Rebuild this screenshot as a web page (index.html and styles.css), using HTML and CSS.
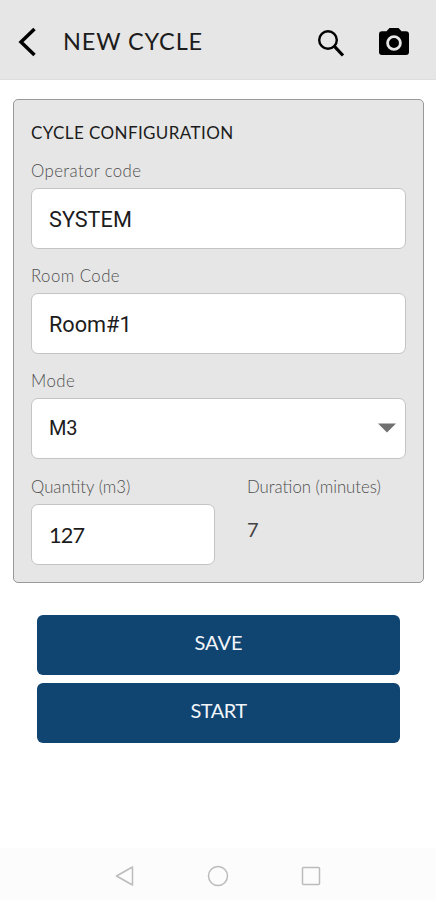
FILE: index.html
```html
<!DOCTYPE html>
<html lang="en">
<head>
<meta charset="utf-8">
<title>New Cycle</title>
<link rel="stylesheet" href="styles.css">
</head>
<body>
<header class="bar">
  <svg class="back" width="20" height="32" viewBox="0 0 20 32"><path d="M16.500 3 3 16 16.500 29" fill="none" stroke="#000" stroke-width="3.500"/></svg>
  <h1 class="title">NEW CYCLE</h1>
  <svg class="search" width="28" height="28" viewBox="0 0 28 28" fill="none" stroke="#000"><circle cx="11" cy="11" r="8.800" stroke-width="2.400"/><path d="M17.200 17.200 26 26.500" stroke-width="3.200"/></svg>
  <svg class="camera" width="32" height="30" viewBox="0 0 32 30"><path d="M11.500 1h9l3 3.300H28a3 3 0 0 1 3 3V25a3 3 0 0 1-3 3H4a3 3 0 0 1-3-3V7.300a3 3 0 0 1 3-3h4.500z"/><circle cx="16" cy="16" r="6.400" fill="#000" stroke="#e6e6e6" stroke-width="2.800"/></svg>
</header>
<main class="content">
  <section class="card">
    <h2 class="heading">CYCLE CONFIGURATION</h2>
    <div class="group">
      <div class="label operator">Operator code</div>
      <div class="field"><span class="system">SYSTEM</span></div>
    </div>
    <div class="group">
      <div class="label room">Room Code</div>
      <div class="field"><span class="room-value">Room#1</span></div>
    </div>
    <div class="group">
      <div class="label mode">Mode</div>
      <div class="field select"><span class="mode-value">M3</span><svg width="18" height="10" viewBox="0 0 18 10"><path d="M0 .5h18L9 9.500z" fill="#707070"/></svg></div>
    </div>
    <div class="columns">
      <div>
        <div class="label quantity">Quantity (m3)</div>
        <div class="field number"><span>127</span></div>
      </div>
      <div>
        <div class="label duration">Duration (minutes)</div>
        <div class="result">7</div>
      </div>
    </div>
  </section>
  <div class="actions">
    <button class="save">SAVE</button>
    <button class="start">START</button>
  </div>
</main>
<nav class="nav">
  <svg width="20" height="22" viewBox="0 0 20 22"><path d="M17.500 2v18L1.500 11z"/></svg>
  <svg width="22" height="22" viewBox="0 0 22 22"><circle cx="11" cy="11" r="9.500"/></svg>
  <svg width="20" height="20" viewBox="0 0 20 20"><rect x="1.500" y="1.500" width="17" height="17" rx="1"/></svg>
</nav>
</body>
</html>
```
FILE: styles.css
```css
* { box-sizing: border-box; }
body { margin: 0; height: 900px; display: flex; flex-direction: column; background: #fff; color: #1c1c1c; font-family: Lato, "Liberation Sans", sans-serif; overflow: hidden; }
.bar { height: 80px; flex: none; display: flex; align-items: center; padding: 5px 26px 0 18px; background: #e6e6e6; border-bottom: 1px solid #dedede; }
.title { margin: -2px auto 0 25px; font-size: 23.500px; line-height: 30px; font-weight: 400; letter-spacing: .85px; white-space: nowrap; }
.search { margin: 2px 33px 0 0; }
.content { flex: 1; padding: 19px 12px 0 13px; }
.card { height: 484px; border: 1px solid #999; border-radius: 5px; background: #e6e6e6; padding: 23px 17px 0; }
.heading { margin: 0 0 8px; font-size: 17px; line-height: 20px; font-weight: 400; letter-spacing: .4px; white-space: nowrap; }
.label { height: 20px; margin-bottom: 8px; font-size: 16.800px; line-height: 22px; color: #505050; font-weight: 300; white-space: nowrap; }
.operator { letter-spacing: .4px; }
.room, .mode { letter-spacing: .45px; }
.quantity, .duration { letter-spacing: 0; }
.group { height: 105.200px; padding-top: 10px; }
.field { height: 61px; display: flex; align-items: center; justify-content: space-between; padding: 3px 9px 0 17px; border: 1px solid #c4c4c4; border-radius: 7px; background: #fff; font: 400 21.700px/28px Roboto, sans-serif; }
.select { padding-top: 1px; padding-bottom: 3px; }
.mode-value { font-size: 20px; letter-spacing: -.3px; }
.columns { display: grid; grid-template-columns: 184px 1fr; column-gap: 32px; padding-top: 10px; }
.heading + .group { margin-top: -1px; }
.number { padding-top: 1px; font-family: Lato, sans-serif; letter-spacing: -.8px; }
.result { padding-top: 11px; font-size: 20px; line-height: 28px; color: #444; }
.actions { display: flex; flex-direction: column; gap: 8px; padding: 32px 12px 0 24px; }
.actions button { width: 363px; height: 60px; border: 0; border-radius: 6px; background: #104471; color: #f1f5fa; font: 400 20px/26px Lato, sans-serif; padding: 0 0 6px; }
.start { letter-spacing: -.5px; }
.nav { height: 52px; flex: none; display: flex; justify-content: space-between; align-items: center; padding: 3px 115px 0; background: #fcfcfc; }
.nav svg { fill: none; stroke: #bcbcbc; stroke-width: 1.500px; stroke-linejoin: round; }
```
